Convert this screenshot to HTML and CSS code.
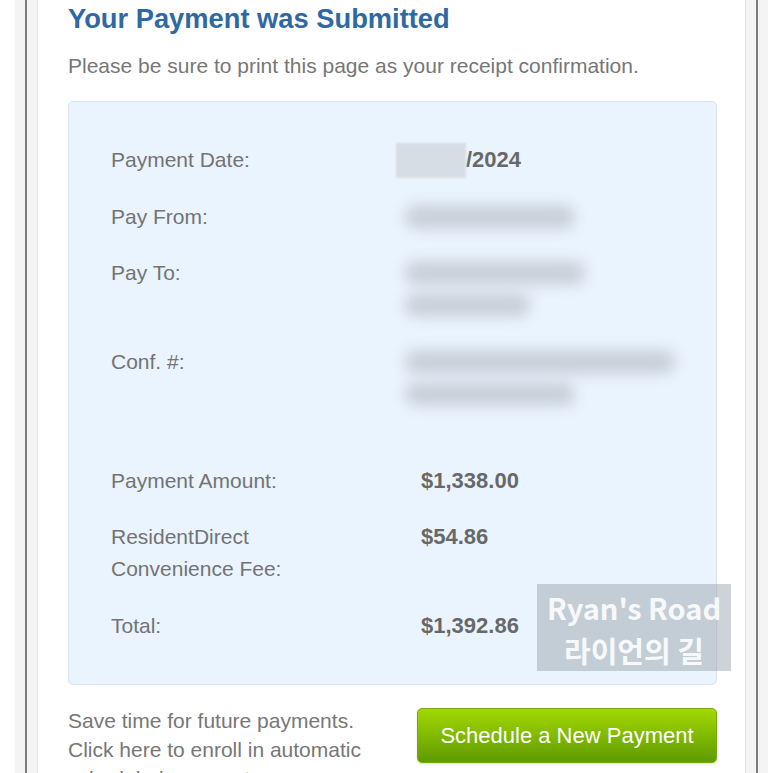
FILE: index.html
```html
<!DOCTYPE html>
<html>
<head>
	<title>Payment Submitted</title>
	<link rel="stylesheet" href="styles.css">
</head>
<body>
	<div class="device">
		<div class="bezel">
			<div class="page">
				<h2 class="title">Your Payment was Submitted</h2>
				<p class="intro">Please be sure to print this page as your receipt confirmation.</p>

				<div class="receipt">
					<div class="row">
						<div class="label">Payment Date:</div>
						<div class="value"><span class="mask"></span>/2024</div>
					</div>
					<div class="row">
						<div class="label">Pay From:</div>
						<div class="value stack"><span class="blur" style="width: 170px"></span></div>
					</div>
					<div class="row">
						<div class="label">Pay To:</div>
						<div class="value stack">
							<span class="blur" style="width: 180px"></span>
							<span class="blur" style="width: 125px"></span>
						</div>
					</div>
					<div class="row">
						<div class="label">Conf. #:</div>
						<div class="value stack">
							<span class="blur" style="width: 270px"></span>
							<span class="blur" style="width: 170px"></span>
						</div>
					</div>

					<div class="row row-amount">
						<div class="label">Payment Amount:</div>
						<div class="value">$1,338.00</div>
					</div>
					<div class="row">
						<div class="label">ResidentDirect<br>Convenience Fee:</div>
						<div class="value">$54.86</div>
					</div>
					<div class="row">
						<div class="label">Total:</div>
						<div class="value">$1,392.86</div>
					</div>
				</div>

				<div class="footer">
					<p class="enroll">Save time for future payments. Click here to enroll in automatic scheduled payments.</p>
					<a class="btn" href="#">Schedule a New Payment</a>
				</div>

				<div class="watermark">
					<div>Ryan's Road</div>
					<div>라이언의 길</div>
				</div>
			</div>
		</div>
	</div>
</body>
</html>
```

FILE: styles.css
```css
html, body {
	margin: 0;
	height: 100%;
	overflow: hidden;
}

body {
	background-color: #fff;
	font-family: "Liberation Sans", Arial, sans-serif;
}

.device {
	margin: 0 5px 0 15px;
	padding: 0 10px;
	height: 100%;
	background-color: #f4f4f4;
	box-sizing: border-box;
}

.bezel {
	height: 100%;
	padding: 0 10px;
	border-left: 2px solid #7c7c7c;
	border-right: 2px solid #7c7c7c;
	box-sizing: border-box;
}

.page {
	position: relative;
	height: 100%;
	padding: 0 28px 0 30px;
	background-color: #fff;
	border-left: 1px solid #e8e8e8;
	border-right: 1px solid #e2e2e2;
	box-sizing: border-box;
}

.title {
	margin: 0;
	padding-top: 3px;
	font-size: 27.3px;
	line-height: 32px;
	color: #2f69a3;
}

.intro {
	margin: 18px 0 0;
	font-size: 21px;
	line-height: 25px;
	color: #777;
}

.receipt {
	margin-top: 23px;
	padding: 42px 42px 42px;
	background-color: #eaf4fe;
	border: 1px solid #d8e5f1;
	border-radius: 5px;
}

.row {
	display: grid;
	grid-template-columns: 310px 1fr;
	font-size: 21px;
	line-height: 32px;
	margin-bottom: 24.5px;
}

.row:last-child {
	margin-bottom: 0;
}

.row-amount {
	margin-top: 55px;
}

.label {
	color: #737373;
}

.value {
	font-weight: bold;
	font-size: 22px;
	color: #686868;
}

.stack {
	display: flex;
	flex-direction: column;
}

.mask {
	display: inline-block;
	vertical-align: top;
	width: 70px;
	height: 35px;
	margin: -1px 0 -2px -25px;
	background-color: #d6dde5;
	filter: blur(1px);
}

.blur {
	height: 24px;
	margin: 4px 0 4px -16px;
	background-color: #c8d0d9;
	border-radius: 12px;
	filter: blur(7px);
}

.footer {
	display: flex;
	justify-content: space-between;
	align-items: flex-start;
	margin-top: 23px;
}

.enroll {
	width: 310px;
	margin: -2px 0 0;
	font-size: 21px;
	line-height: 29px;
	color: #777;
}

.btn {
	display: block;
	width: 298px;
	height: 53px;
	line-height: 53px;
	text-align: center;
	font-size: 22px;
	color: #fff;
	text-decoration: none;
	background: linear-gradient(#a3d800, #5f9b00);
	border: 1px solid #72aa10;
	border-radius: 5px;
	box-shadow: 0 1px 2px rgba(0, 0, 0, 0.15);
}

.watermark {
	position: absolute;
	left: 499px;
	top: 584px;
	width: 194px;
	height: 87px;
	padding-top: 2px;
	box-sizing: border-box;
	background-color: rgba(140, 150, 160, 0.42);
	color: rgba(255, 255, 255, 0.9);
	font-family: "Noto Sans CJK KR", "Lato", sans-serif;
	font-weight: bold;
	font-size: 29px;
	line-height: 43px;
	text-align: center;
}
```
